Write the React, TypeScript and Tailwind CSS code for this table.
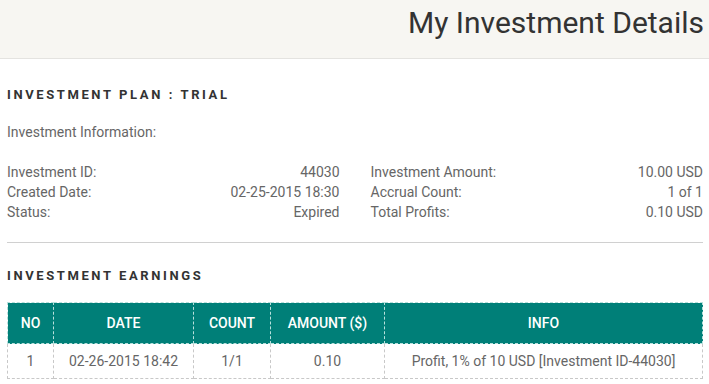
const rows = [
  { l1: "Investment ID:", v1: "44030", l2: "Investment Amount:", v2: "10.00 USD" },
  { l1: "Created Date:", v1: "02-25-2015 18:30", l2: "Accrual Count:", v2: "1 of 1" },
  { l1: "Status:", v1: "Expired", l2: "Total Profits:", v2: "0.10 USD" },
];

const App = () => {
  return (
    <div className="w-[709px] h-[384px] overflow-hidden bg-white font-['Roboto',sans-serif]">
      {/* Page title */}
      <header className="h-[59px] bg-[#f7f6f2] border-b border-[#e4e3e0] flex items-start justify-end pr-[5px] pt-[3px]">
        <h1 className="text-[30px] leading-[40px] text-[#333] font-normal">My Investment Details</h1>
      </header>

      <div className="pl-[7px] pr-[6px]">
        <h2 className="mt-[28px] text-[13px] leading-[16px] font-bold tracking-[0.2em] text-[#333]">
          INVESTMENT PLAN : TRIAL
        </h2>
        <p className="mt-[21px] text-[14px] leading-[16px] text-[#666]">Investment Information:</p>

        <div className="mt-[22px] grid grid-cols-2 gap-x-[31px] text-[14px] leading-[20px] text-[#666]">
          <div>
            {rows.map((r) => (
              <div key={r.l1} className="flex justify-between">
                <span>{r.l1}</span>
                <span>{r.v1}</span>
              </div>
            ))}
          </div>
          <div>
            {rows.map((r) => (
              <div key={r.l2} className="flex justify-between">
                <span>{r.l2}</span>
                <span>{r.v2}</span>
              </div>
            ))}
          </div>
        </div>

        <hr className="mt-[20px] border-t border-[#d0d0d0]" />

        <h2 className="mt-[25px] text-[13px] leading-[16px] font-bold tracking-[0.2em] text-[#333]">
          INVESTMENT EARNINGS
        </h2>

        <table className="mt-[18px] w-full border-collapse text-[14px] text-center">
          <thead>
            <tr className="bg-[#007f78] text-white h-[41px]">
              <th className="w-[46px] font-medium border border-dashed border-[#b8e0dc]">NO</th>
              <th className="w-[140px] font-medium border border-dashed border-[#b8e0dc]">DATE</th>
              <th className="w-[77px] font-medium border border-dashed border-[#b8e0dc]">COUNT</th>
              <th className="w-[114px] font-medium border border-dashed border-[#b8e0dc]">AMOUNT ($)</th>
              <th className="font-medium border border-dashed border-[#b8e0dc]">INFO</th>
            </tr>
          </thead>
          <tbody>
            <tr className="h-[35px] text-[#666]">
              <td className="border border-dashed border-[#c8c8c8]">1</td>
              <td className="border border-dashed border-[#c8c8c8]">02-26-2015 18:42</td>
              <td className="border border-dashed border-[#c8c8c8]">1/1</td>
              <td className="border border-dashed border-[#c8c8c8]">0.10</td>
              <td className="border border-dashed border-[#c8c8c8]">Profit, 1% of 10 USD [Investment ID-44030]</td>
            </tr>
          </tbody>
        </table>
      </div>
    </div>
  );
};

export default App;
